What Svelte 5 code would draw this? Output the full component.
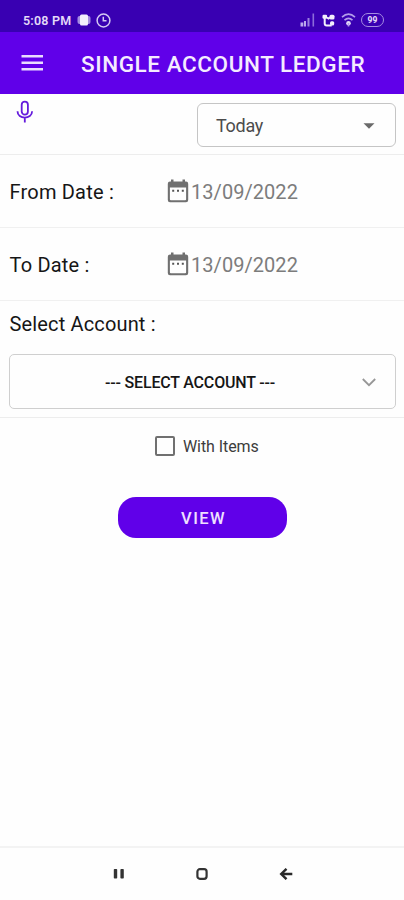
<script>
  const dates = [
    { label: 'From Date :', value: '13/09/2022' },
    { label: 'To Date :', value: '13/09/2022' }
  ];
  let withItems = $state(false);
</script>

<div class="screen">
  <div class="status">
    <span class="time">5:08 PM</span>
    <svg class="vib" width="14" height="12" viewBox="0 0 14 12">
      <rect x="0.5" y="2" width="13" height="8" rx="2" fill="#a68de2" />
      <rect x="3" y="0.5" width="8" height="11" rx="1.5" fill="#f3effc" />
    </svg>
    <svg class="clock" width="15" height="15" viewBox="0 0 15 15" fill="none" stroke="#d5c8f3" stroke-width="1.5">
      <circle cx="7.5" cy="7.5" r="6.4" />
      <path d="M7.3 3.8v4h3.2" />
    </svg>
    <span class="grow"></span>
    <svg width="15" height="14" viewBox="0 0 15 14">
      <path d="M.5 9.500h2.800v4H.5zM4 8h2v5.500h-2z" fill="#bba8ec" />
      <path d="M7.500 5h2v8.500h-2z" fill="#9c80e0" />
      <path d="M12.500.5h1.600v13h-1.600z" fill="#8c6cda" />
    </svg>
    <svg class="sync" width="14" height="13" viewBox="0 0 14 13">
      <g fill="#f3effc">
        <rect x=".5" y=".8" width="4.600" height="4" rx="1.200" />
        <rect x="7.500" y=".8" width="5" height="4.600" rx="1.500" />
        <rect x="8" y="7.200" width="4.200" height="4.200" rx="1.500" />
      </g>
      <path d="M2.700 4v5.500q0 2 2 2h5M5 3.500l1.500 1 1.500-1" fill="none" stroke="#f3effc" stroke-width="2" />
    </svg>
    <svg class="wifi" width="15" height="14" viewBox="0 0 15 14" fill="none" stroke="#b39dea" stroke-width="1.6">
      <path d="M1 4.2Q7.5-1.8 14 4.2M3.5 7.2Q7.5 3.5 11.5 7.2" />
      <circle cx="7.5" cy="10.2" r="2.3" fill="#e3daf8" stroke="none" />
      <path d="M7.5 10v3.5" />
    </svg>
    <span class="battery">99</span>
  </div>

  <header>
    <svg width="22" height="18" viewBox="0 0 22 18" fill="#e9dcff">
      <path d="M.5 1H22v2.400H.5zM.5 7.500H22v2.400H.5zM.5 14H22v2.400H.5z" />
    </svg>
    <h1>SINGLE ACCOUNT LEDGER</h1>
  </header>

  <section class="period">
    <svg class="mic" width="18" height="24" viewBox="0 0 18 24" fill="none" stroke="#641bdc" stroke-width="1.8">
      <rect x="5.7" y="1.6" width="6.2" height="13" rx="3.1" />
      <path d="M1.5 11.2c0 8.5 14.6 8.5 14.6 0M8.8 17.5v5" />
    </svg>
    <div class="select">
      <span>Today</span>
      <svg width="12" height="6" viewBox="0 0 12 6"><path d="M.5.2h11L6 5.8z" fill="#6a6a6a" /></svg>
    </div>
  </section>

  {#each dates as d}
    <section class="date">
      <span class="label">{d.label}</span>
      <svg width="22" height="24" viewBox="0 0 22 24">
        <path d="M4 .5h2.500v2h9v-2H18v2h1q2.200 0 2.200 2.200V21q0 2.200-2.200 2.200H3Q.8 23.200.8 21V4.700Q.8 2.500 3 2.500h1zM2.900 8.500V20.200q0 1 1 1H18.100q1 0 1-1V8.500z" fill="#707070" fill-rule="evenodd" />
        <path d="M5.200 10.700h2v2h-2zM10 10.700h2v2h-2zM14.800 10.700h2v2h-2z" fill="#555" />
      </svg>
      <span class="value">{d.value}</span>
    </section>
  {/each}

  <section class="account">
    <div class="label">Select Account :</div>
    <div class="picker">
      <span>--- SELECT ACCOUNT ---</span>
      <svg width="14" height="9" viewBox="0 0 14 9" fill="none" stroke="#979797" stroke-width="1.8"><path d="M.8 1l6.200 6.200L13.200 1" /></svg>
    </div>
  </section>

  <label class="check">
    <input type="checkbox" bind:checked={withItems} />
    <span>With Items</span>
  </label>

  <button>VIEW</button>

  <nav>
    <svg width="12" height="12" viewBox="0 0 12 12" fill="#333"><rect x=".8" y="1" width="3.400" height="9.500" rx=".8" /><rect x="7.400" y="1" width="3.400" height="9.500" rx=".8" /></svg>
    <svg width="12" height="12" viewBox="0 0 12 12" fill="none" stroke="#333" stroke-width="2.200"><rect x="1.400" y="1.200" width="9.200" height="9.600" rx="2.500" /></svg>
    <svg width="14" height="12" viewBox="0 0 14 12" fill="none" stroke="#292929" stroke-width="2.400"><path d="M7.500.8L2.200 6l5.300 5.200M2 6h11.300" /></svg>
  </nav>
</div>

<style>
  :global(body) { margin: 0; background: #fefefe; }
  .screen {
    display: flex;
    flex-direction: column;
    width: 404px;
    height: 900px;
    background: #fefefe;
    font-family: Roboto, "Liberation Sans", sans-serif;
    color: #161616;
    overflow: hidden;
  }
  .screen > * { box-sizing: border-box; flex: none; }
  svg { display: block; flex: none; }
  .status {
    height: 32px;
    padding: 8px 20px 0 23px;
    display: flex;
    align-items: center;
    background: #3900b2;
  }
  .time { width: 54px; font-size: 12.5px; font-weight: 600; letter-spacing: 0.2px; color: #e3daf8; white-space: nowrap; }
  .clock { margin-left: 5px; }
  .grow { flex: 1; }
  .sync { margin-left: 7px; }
  .wifi { margin-left: 5px; }
  .battery {
    box-sizing: border-box;
    width: 23px;
    height: 14px;
    margin-left: 5px;
    border: 1.5px solid #a68de2;
    border-radius: 7px;
    font-size: 8.5px;
    font-weight: 800;
    line-height: 12px;
    text-align: center;
    color: #e3daf8;
  }
  header {
    height: 62px;
    padding: 0 21px;
    display: flex;
    align-items: center;
    background: #6000e9;
  }
  h1 {
    margin: 1px 0 0 38px;
    font-size: 22.5px;
    font-weight: 500;
    letter-spacing: 0.57px;
    white-space: nowrap;
    color: #f4ebff;
  }
  .period {
    height: 61px;
    padding: 9px 8px 0 16px;
    display: flex;
    justify-content: space-between;
    align-items: flex-start;
    border-bottom: 1px solid #ededed;
  }
  .mic { margin-top: -3px; }
  .select {
    box-sizing: border-box;
    width: 199px;
    height: 44px;
    padding: 1px 20px 0 18px;
    display: flex;
    align-items: center;
    justify-content: space-between;
    border: 1.5px solid #c5c5c5;
    border-radius: 6px;
    font-size: 18px;
    letter-spacing: -0.3px;
    color: #4c4c4c;
  }
  .date {
    height: 73px;
    padding: 2px 10px 0 9px;
    display: flex;
    align-items: center;
    border-bottom: 1px solid #f0f0f0;
  }
  .label { font-size: 20px; letter-spacing: 0.2px; }
  .date .label { width: 158px; text-indent: 0.5px; }
  .date svg { margin-top: -2px; }
  .value { margin-left: 2px; font-size: 20px; letter-spacing: 0.05px; color: #7c7c7c; }
  .account {
    height: 117px;
    padding: 12px 8px 0 9px;
    border-bottom: 1px solid #ededed;
  }
  .account .label { height: 41px; line-height: 23px; letter-spacing: 0.15px; text-indent: 0.5px; }
  .picker {
    box-sizing: border-box;
    height: 55px;
    padding: 2px 19px 0 95px;
    display: flex;
    align-items: center;
    justify-content: space-between;
    border: 1.5px solid #cfcfcf;
    border-radius: 5px;
    font-size: 16px;
    font-weight: 500;
    letter-spacing: -0.18px;
  }
  .check {
    height: 56px;
    padding-left: 155px;
    display: flex;
    align-items: center;
    font-size: 16px;
    letter-spacing: -0.08px;
    color: #3c3c3c;
  }
  .check input {
    appearance: none;
    width: 20px;
    height: 20px;
    margin: 0 8px 0 0;
    border: 2px solid #707070;
    border-radius: 2px;
  }
  .check input:checked { background: #6000e9; }
  button {
    width: 169px;
    height: 41px;
    margin: 23px 0 0 118px;
    padding: 2px 0 0 2px;
    border: 0;
    border-radius: 18px;
    background: #6000e9;
    color: #efe0ff;
    font: 500 16.5px Roboto, sans-serif;
    letter-spacing: 1.4px;
  }
  nav {
    height: 54px;
    margin-top: auto;
    padding: 0 111px 0 113px;
    display: flex;
    align-items: center;
    justify-content: space-between;
    border-top: 2px solid #f3f3f3;
  }
</style>
